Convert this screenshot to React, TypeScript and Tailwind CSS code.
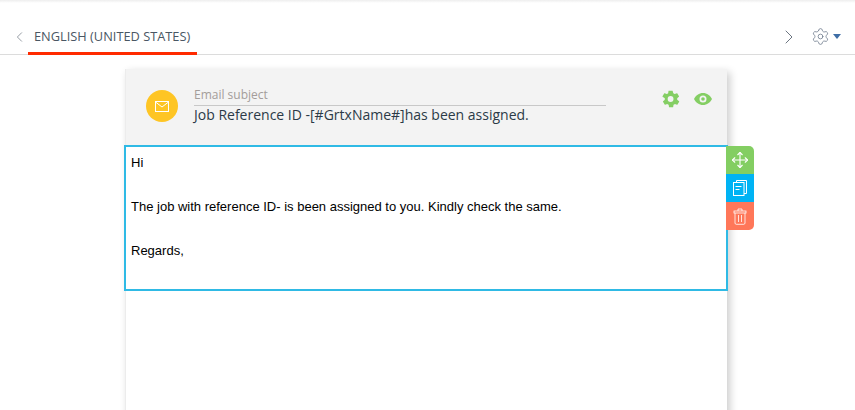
import React from 'react';
import { ChevronLeft, ChevronRight, Settings, Move } from 'lucide-react';

const CopyIcon = () => (
  <svg width="16" height="16" viewBox="0 0 16 16" fill="none" stroke="white" strokeWidth="1">
    <path d="M4.500 2.500V0.500H14.500V13.500H12" />
    <rect x="1.500" y="2.500" width="10.500" height="13" />
    <path d="M3.500 6.500H9.500M3.500 9.500H7.500" />
  </svg>
);

const TrashIcon = () => (
  <svg width="14" height="17" viewBox="0 0 14 17" fill="none" stroke="white" strokeWidth="0.8">
    <path d="M5 3V1H9V3" />
    <rect x="1" y="3" width="12" height="2" />
    <path d="M2 5V15C2 15.800 2.500 16.300 3.200 16.300H10.800C11.500 16.300 12 15.800 12 15V5" />
    <path d="M5.500 7V14M8.500 7V14" />
  </svg>
);

export default function App() {
  return (
    <div className="h-[410px] w-[855px] overflow-hidden bg-white font-['Open_Sans',sans-serif]">
      <div className="h-[3px] bg-gradient-to-b from-[#eeeeee] to-white" />

      {/* Tabs */}
      <div className="flex h-[52px] items-start border-b border-[#dcdcdc] pl-[11px] pr-[14px] pt-[17px]">
        <div className="flex h-[33px] w-[17px] items-center">
          <ChevronLeft size={24} strokeWidth={1} className="text-[#6b7480]" />
        </div>
        <div className="relative flex h-[33px] items-center pl-[6px] text-[12.8px] text-[#4a5764]">
          ENGLISH (UNITED STATES)
          <div className="absolute left-0 top-[32px] h-[3px] w-[169px] bg-[#ff2a00]" />
        </div>
        <div className="ml-auto flex h-[33px] items-center gap-[10px]">
          <ChevronRight size={24} strokeWidth={1} className="text-[#6b7480]" />
          <div className="flex items-center gap-[3px]">
            <Settings size={19} strokeWidth={1} className="text-[#6d7a8c]" />
            <div className="h-0 w-0 border-x-4 border-t-[5px] border-x-transparent border-t-[#3f6ea6]" />
          </div>
        </div>
      </div>

      {/* Editor card */}
      <div className="relative ml-[125px] mt-[14px] h-[400px] w-[602px] border-l border-[#ececec] shadow-[3px_3px_8px_rgba(0,0,0,0.2)]">
        <div className="flex h-[76px] items-start bg-[#f3f3f3] pl-[20px]">
          <div className="mt-[21px] flex h-8 w-8 items-center justify-center rounded-full bg-[#fec524]">
            <svg width="14" height="11" viewBox="0 0 14 11" fill="none" stroke="white" strokeWidth="1">
              <rect x="0.500" y="0.500" width="13" height="10" />
              <path d="M0.500 1L7 6L13.500 1" />
            </svg>
          </div>
          <div className="ml-4 mt-[18px] w-[412px]">
            <div className="h-[19px] border-b border-[#c8c8c8] text-[12px] leading-[16px] text-[#a39d9a]">Email subject</div>
            <div className="text-[14px] leading-[18px] text-[#2b3a47]">Job Reference ID -[#GrtxName#]has been assigned.</div>
          </div>
          <div className="ml-[55px] mt-[20px] flex items-center gap-[13px]">
            <svg width="20" height="20" viewBox="0 0 24 24" fill="#84ce63">
              <path d="M19.400 13c.1-.3.1-.7.1-1s0-.7-.1-1l2.100-1.600c.2-.2.2-.4.1-.6l-2-3.500c-.1-.2-.4-.3-.6-.2l-2.500 1c-.5-.4-1.100-.7-1.700-1L14 2.400c0-.2-.3-.4-.5-.4h-4c-.2 0-.5.2-.5.4l-.4 2.700c-.6.3-1.100.6-1.700 1l-2.500-1c-.2-.1-.5 0-.6.2l-2 3.500c-.1.2-.1.5.1.6L4.600 11c0 .3-.1.7-.1 1s0 .7.1 1l-2.100 1.600c-.2.2-.2.4-.1.6l2 3.500c.1.2.4.3.6.2l2.500-1c.5.4 1.100.7 1.700 1l.4 2.700c0 .2.3.4.5.4h4c.2 0 .5-.2.5-.4l.4-2.700c.6-.3 1.100-.6 1.700-1l2.500 1c.2.1.5 0 .6-.2l2-3.500c.1-.2.1-.5-.1-.6L19.400 13zM11.500 15.500a3.500 3.500 0 1 1 0-7 3.500 3.500 0 0 1 0 7z" />
            </svg>
            <svg className="-mt-[1px]" width="18" height="12" viewBox="0 0 18 12" fill="#84ce63">
              <path fillRule="evenodd" d="M9 0C5 0 1.800 2.500 0 6c1.800 3.500 5 6 9 6s7.200-2.500 9-6c-1.800-3.500-5-6-9-6zm0 9.500a3.500 3.500 0 1 1 0-7 3.500 3.500 0 0 1 0 7zM9 4.200a1.800 1.800 0 1 0 0 3.600 1.800 1.800 0 0 0 0-3.600z" />
            </svg>
          </div>
        </div>

        {/* Selected block */}
        <div className="relative -ml-[2px] -mr-[1px] h-[146px] border-2 border-[#2fbae5] bg-white pl-[5px] pt-[5px] font-['Liberation_Sans',sans-serif] text-[13px] leading-[22px] text-black">
          <p className="h-[22px]">Hi</p>
          <p className="mt-[22px] h-[22px]">The job with reference ID- is been assigned to you. Kindly check the same.</p>
          <p className="mt-[22px] h-[22px]">Regards,</p>

          <div className="absolute left-[600px] top-[-1px] flex w-[28px] flex-col overflow-hidden rounded-r-[5px]">
            <div className="flex h-[28px] items-center justify-center bg-[#83ce62]">
              <Move size={18} strokeWidth={1.5} className="text-white" />
            </div>
            <div className="flex h-[28px] items-center justify-center bg-[#00b3f4]">
              <CopyIcon />
            </div>
            <div className="flex h-[28px] items-center justify-center bg-[#ff7759]">
              <TrashIcon />
            </div>
          </div>
        </div>
      </div>
    </div>
  );
}
